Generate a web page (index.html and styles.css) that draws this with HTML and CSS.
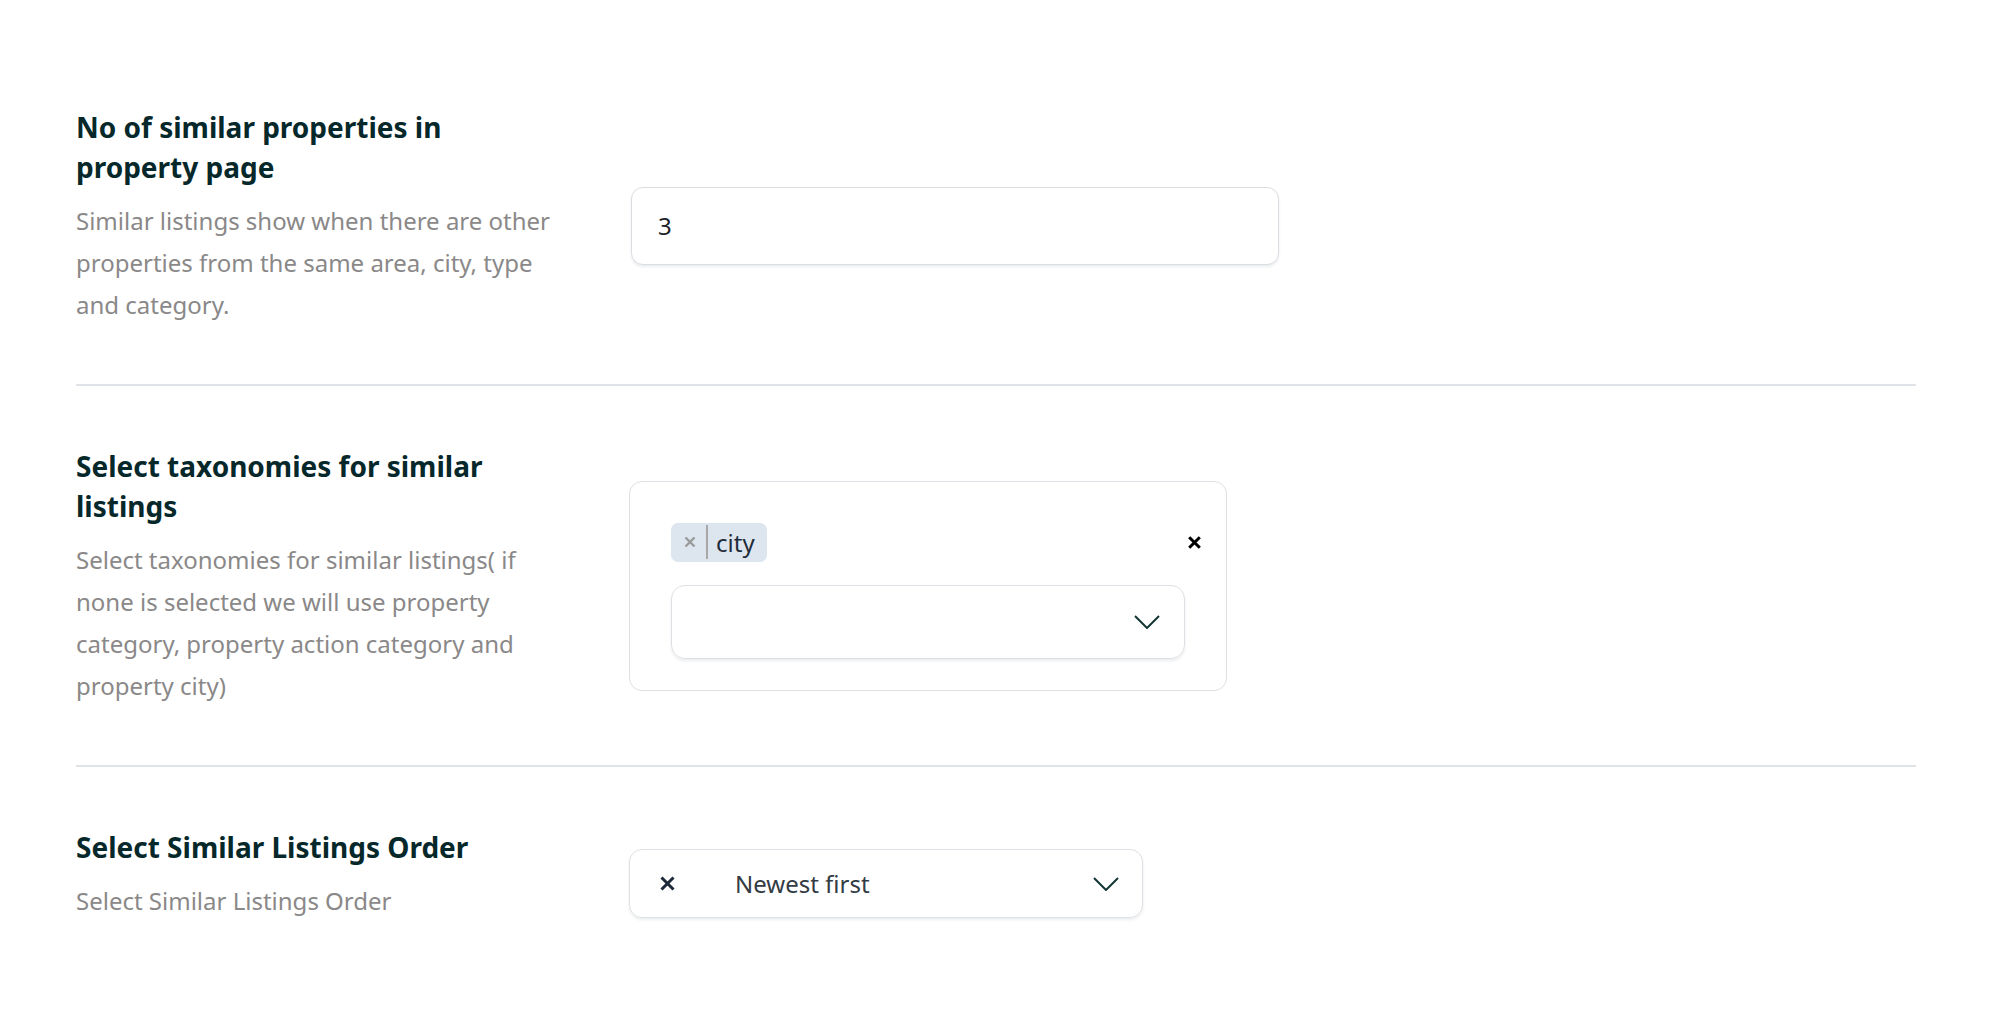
FILE: index.html
```html
<!DOCTYPE html>
<html lang="en">
<head>
<meta charset="utf-8">
<title>Similar listings settings</title>
<link rel="stylesheet" href="styles.css">
</head>
<body>
<main class="page">
  <section class="row">
    <div class="info">
      <h2 class="title">No of similar properties in property page</h2>
      <p class="desc">Similar listings show when there are other properties from the same area, city, type and category.</p>
    </div>
    <div class="control">
      <input class="text-input" type="text" value="3">
    </div>
  </section>
  <hr class="divider">
  <section class="row">
    <div class="info">
      <h2 class="title">Select taxonomies for similar listings</h2>
      <p class="desc">Select taxonomies for similar listings( if none is selected we will use property category, property action category and property city)</p>
    </div>
    <div class="control">
      <div class="multi">
        <div class="tag-row">
          <span class="tag">
            <svg class="tag-x" viewBox="0 0 12 12" width="12" height="12"><path d="M1.5 1.5 L10.5 10.5 M10.5 1.5 L1.5 10.5"/></svg>
            <span class="tag-sep"></span>
            <span class="tag-label">city</span>
          </span>
          <svg class="clear-x" viewBox="0 0 13 13" width="13" height="13"><path d="M1.2 1.2 L11.8 11.8 M11.8 1.2 L1.2 11.8"/></svg>
        </div>
        <div class="inner-select">
          <svg class="chevron" viewBox="0 0 26 14" width="26" height="14"><polyline points="1,1 13,13 25,1"/></svg>
        </div>
      </div>
    </div>
  </section>
  <hr class="divider">
  <section class="row">
    <div class="info">
      <h2 class="title">Select Similar Listings Order</h2>
      <p class="desc">Select Similar Listings Order</p>
    </div>
    <div class="control">
      <div class="select">
        <svg class="sel-x" viewBox="0 0 15 15" width="15" height="15"><path d="M1.5 1.5 L13.5 13.5 M13.5 1.5 L1.5 13.5"/></svg>
        <span class="sel-value">Newest first</span>
        <svg class="chevron" viewBox="0 0 26 14" width="26" height="14"><polyline points="1,1 13,13 25,1"/></svg>
      </div>
    </div>
  </section>
</main>
</body>
</html>
```
FILE: styles.css
```css
html, body {
  margin: 0;
  padding: 0;
  background: #ffffff;
}

body {
  font-family: "Noto Sans", "Open Sans", sans-serif;
}

.page {
  padding: 47px 76px 0 76px;
}

.row {
  display: grid;
  grid-template-columns: 490px auto;
  column-gap: 63px;
  align-items: center;
  padding: 60px 0 40px 0;
}

.info {
  padding-bottom: 18px;
}

.title {
  margin: 0;
  font-size: 28px;
  line-height: 40px;
  font-weight: 700;
  color: #06282a;
}

.desc {
  margin: 13px 0 0 0;
  font-size: 24px;
  line-height: 42px;
  color: #8a8888;
}

.divider {
  margin: 0;
  border: 0;
  height: 2px;
  background: #dfe2e6;
}

.control {
  display: flex;
  align-items: center;
}

.text-input {
  box-sizing: border-box;
  width: 648px;
  height: 78px;
  margin: 0 0 0 2px;
  padding: 0 26px;
  border: 1px solid #dadde2;
  border-radius: 12px;
  box-shadow: 0 2px 3px rgba(16, 24, 40, 0.08);
  font-family: "Noto Sans", sans-serif;
  font-size: 24px;
  color: #1d2327;
  outline: none;
  background: #fff;
}

.multi {
  box-sizing: border-box;
  width: 598px;
  height: 210px;
  padding: 41px 41px 31px 41px;
  border: 1px solid #dde0e4;
  border-radius: 13px;
  display: flex;
  flex-direction: column;
  gap: 23px;
}

.tag-row {
  display: flex;
  align-items: center;
  justify-content: space-between;
  height: 39px;
  margin-right: -16px;
}

.tag {
  display: inline-flex;
  align-items: center;
  height: 39px;
  box-sizing: border-box;
  padding: 0 12px 0 13px;
  background: #dde6ee;
  border-radius: 7px;
}

.tag-x {
  stroke: #9a9a9a;
  stroke-width: 2.4;
  fill: none;
}

.tag-sep {
  width: 2px;
  height: 34px;
  margin: 0 8px 0 10px;
  background: #a8a8a8;
}

.tag-label {
  font-size: 24px;
  line-height: 39px;
  color: #1f2b3a;
}

.clear-x {
  stroke: #000000;
  stroke-width: 3;
  fill: none;
}

.inner-select {
  box-sizing: border-box;
  height: 75px;
  border: 1px solid #dde0e4;
  border-radius: 14px;
  box-shadow: 0 2px 3px rgba(16, 24, 40, 0.08);
  display: flex;
  align-items: center;
  justify-content: flex-end;
  padding-right: 24px;
}

.chevron {
  stroke: #143636;
  stroke-width: 2;
  fill: none;
}

.select {
  box-sizing: border-box;
  width: 514px;
  height: 69px;
  border: 1px solid #dde0e4;
  border-radius: 13px;
  box-shadow: 0 2px 3px rgba(16, 24, 40, 0.08);
  display: flex;
  align-items: center;
  padding: 0 23px 0 30px;
}

.sel-x {
  stroke: #1d2838;
  stroke-width: 3;
  fill: none;
  flex: none;
}

.sel-value {
  flex: 1;
  margin-left: 60px;
  font-size: 24px;
  color: #333b44;
}
```
